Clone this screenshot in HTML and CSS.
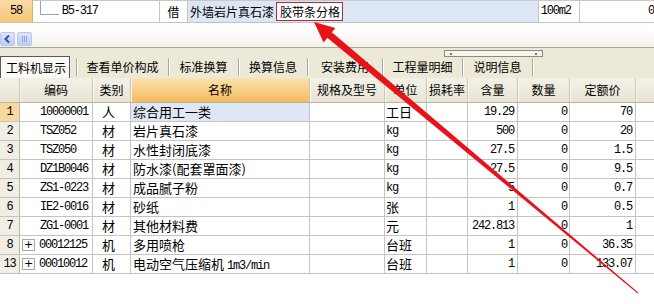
FILE: index.html
```html
<!DOCTYPE html>
<html>
<head>
<meta charset="utf-8">
<link rel="stylesheet" href="styles.css">
</head>
<body>
<div class="page">
  <div class="toprow">
    <div class="n58 mono">58</div>
    <div class="tree"><svg class="tree-line" width="19" height="22" viewBox="0 0 19 22"><path d="M0.5 0 V13.5 H19" fill="none" stroke="#a0a0a0" stroke-width="1"/></svg><span class="mono">B5-317</span></div>
    <div class="jie">借</div>
    <div class="desc">外墙岩片真石漆<span class="redbox">胶带条分格</span></div>
    <div class="unit mono">100m2</div>
    <div class="qty mono">0</div>
  </div>
  <div class="gap"></div>
  <div class="hscroll">
    <div class="sb-btn"><svg width="15" height="14" viewBox="0 0 15 14"><path d="M9 3.5 L5.5 7 L9 10.5" fill="none" stroke="#3d5590" stroke-width="2"/></svg></div>
    <div class="sb-thumb"><svg width="15" height="14" viewBox="0 0 15 14"><path d="M5.5 4 V10 M7.5 4 V10 M9.5 4 V10" stroke="#8ea5d8" stroke-width="1"/></svg></div>
  </div>
  <div class="tabbar">
    <div class="grip"><span class="dot"></span><span class="dot"></span></div>
    <div class="tab sel">工料机显示</div>
    <div class="tabgap"></div>
    <div class="tab w92">查看单价构成</div>
    <div class="tab w70">标准换算</div>
    <div class="tab w69">换算信息</div>
    <div class="tab w75">安装费用</div>
    <div class="tab w80">工程量明细</div>
    <div class="tab w70">说明信息</div>
    <div class="tab tail"></div>
  </div>
  <div class="grid">
    <div class="row head">
      <div class="c hn"></div>
      <div class="c h">编码</div>
      <div class="c h">类别</div>
      <div class="c h hname">名称</div>
      <div class="c h">规格及型号</div>
      <div class="c h">单位</div>
      <div class="c h">损耗率</div>
      <div class="c h">含量</div>
      <div class="c h">数量</div>
      <div class="c h">定额价</div>
      <div class="c h hend"></div>
    </div>
    <div class="row">
      <div class="c num cur mono">1</div>
      <div class="c code mono">10000001</div>
      <div class="c cat">人</div>
      <div class="c name selcell">综合用工一类</div>
      <div class="c"></div>
      <div class="c unitc">工日</div>
      <div class="c"></div>
      <div class="c r mono">19.29</div>
      <div class="c r2 mono">0</div>
      <div class="c r mono">70</div>
      <div class="c end"></div>
    </div>
    <div class="row">
      <div class="c num mono">2</div>
      <div class="c code mono">TSZ052</div>
      <div class="c cat">材</div>
      <div class="c name">岩片真石漆</div>
      <div class="c"></div>
      <div class="c unitc mono">kg</div>
      <div class="c"></div>
      <div class="c r mono">500</div>
      <div class="c r2 mono">0</div>
      <div class="c r mono">20</div>
      <div class="c end"></div>
    </div>
    <div class="row">
      <div class="c num mono">3</div>
      <div class="c code mono">TSZ050</div>
      <div class="c cat">材</div>
      <div class="c name">水性封闭底漆</div>
      <div class="c"></div>
      <div class="c unitc mono">kg</div>
      <div class="c"></div>
      <div class="c r mono">27.5</div>
      <div class="c r2 mono">0</div>
      <div class="c r mono">1.5</div>
      <div class="c end"></div>
    </div>
    <div class="row">
      <div class="c num mono">4</div>
      <div class="c code mono">DZ1B0046</div>
      <div class="c cat">材</div>
      <div class="c name">防水漆(配套罩面漆)</div>
      <div class="c"></div>
      <div class="c unitc mono">kg</div>
      <div class="c"></div>
      <div class="c r mono">27.5</div>
      <div class="c r2 mono">0</div>
      <div class="c r mono">9.5</div>
      <div class="c end"></div>
    </div>
    <div class="row">
      <div class="c num mono">5</div>
      <div class="c code mono">ZS1-0223</div>
      <div class="c cat">材</div>
      <div class="c name">成品腻子粉</div>
      <div class="c"></div>
      <div class="c unitc mono">kg</div>
      <div class="c"></div>
      <div class="c r mono">5</div>
      <div class="c r2 mono">0</div>
      <div class="c r mono">0.7</div>
      <div class="c end"></div>
    </div>
    <div class="row">
      <div class="c num mono">6</div>
      <div class="c code mono">IE2-0016</div>
      <div class="c cat">材</div>
      <div class="c name">砂纸</div>
      <div class="c"></div>
      <div class="c unitc">张</div>
      <div class="c"></div>
      <div class="c r mono">1</div>
      <div class="c r2 mono">0</div>
      <div class="c r mono">0.5</div>
      <div class="c end"></div>
    </div>
    <div class="row">
      <div class="c num mono">7</div>
      <div class="c code mono">ZG1-0001</div>
      <div class="c cat">材</div>
      <div class="c name">其他材料费</div>
      <div class="c"></div>
      <div class="c unitc">元</div>
      <div class="c"></div>
      <div class="c r mono">242.813</div>
      <div class="c r2 mono">0</div>
      <div class="c r mono">1</div>
      <div class="c end"></div>
    </div>
    <div class="row">
      <div class="c num mono">8</div>
      <div class="c code exp mono"><span class="plus">+</span>00012125</div>
      <div class="c cat">机</div>
      <div class="c name">多用喷枪</div>
      <div class="c"></div>
      <div class="c unitc">台班</div>
      <div class="c"></div>
      <div class="c r mono">1</div>
      <div class="c r2 mono">0</div>
      <div class="c r mono">36.35</div>
      <div class="c end"></div>
    </div>
    <div class="row">
      <div class="c num mono">13</div>
      <div class="c code exp mono"><span class="plus">+</span>00010012</div>
      <div class="c cat">机</div>
      <div class="c name">电动空气压缩机 <span class="mono">1m3/min</span></div>
      <div class="c"></div>
      <div class="c unitc">台班</div>
      <div class="c"></div>
      <div class="c r mono">1</div>
      <div class="c r2 mono">0</div>
      <div class="c r mono">133.07</div>
      <div class="c end"></div>
    </div>
  </div>
  <svg class="arrow" width="654" height="304" viewBox="0 0 654 304">
    <polygon points="327,37.5 331.5,32 638.3,292.6 637.7,293.4" fill="#e8121a"/>
    <polygon points="314,22 323.6,42.5 335.4,28.1" fill="#e8121a"/>
  </svg>
</div>
</body>
</html>
```

FILE: styles.css
```css
* { box-sizing: border-box; }
html, body { margin: 0; padding: 0; }
body {
  width: 654px;
  height: 304px;
  overflow: hidden;
  background: #fff;
  font-family: "Noto Sans CJK SC", sans-serif;
  color: #000;
}
.page { position: relative; width: 654px; height: 304px; overflow: hidden; }
.mono {
  font-family: "Liberation Mono", monospace;
  font-size: 12px;
  letter-spacing: -1.2px;
}

/* top row */
.toprow {
  display: flex;
  height: 23px;
  border-top: 1px solid #c8c8c8;
  border-bottom: 1px solid #c0c0c0;
  font-size: 12px;
  line-height: 21px;
  white-space: nowrap;
}
.n58 {
  width: 33px;
  margin-top: -1px;
  height: 22px;
  background: linear-gradient(#fbdca6, #f6c578);
  border-right: 1px solid #d8b070;
  text-align: center;
  line-height: 22px;
}
.tree {
  width: 128px;
  border-right: 1px solid #c4c4c4;
  display: flex;
  align-items: flex-start;
  padding-left: 7px;
}
.tree-line { flex: none; }
.tree .mono { margin-left: 3px; }
.jie {
  width: 28px;
  border-right: 1px solid #c4c4c4;
  text-align: center;
}
.desc {
  width: 353px;
  border-right: 1px solid #c4c4c4;
  background: #dde6f4;
  padding-left: 2px;
  display: flex;
  align-items: center;
}
.redbox {
  display: inline-block;
  margin-left: 2px;
  height: 19px;
  line-height: 17px;
  padding: 0 2px 0 3px;
  border: 1px solid #b8283c;
  background: #fff;
}
.unit {
  width: 42px;
  border-right: 1px solid #c4c4c4;
  padding-left: 2px;
}
.qty {
  width: 74px;
  text-align: right;
}

.gap { height: 7px; }

/* scrollbar */
.hscroll {
  height: 17px;
  display: flex;
  align-items: center;
  gap: 2px;
  padding-left: 0;
  background: linear-gradient(#fefefe, #f3f1e8);
}
.sb-btn, .sb-thumb {
  width: 15px;
  height: 14px;
  border: 1px solid #b7c9ef;
  border-radius: 2px;
  background: linear-gradient(#dbe5fd, #bccdf6);
  display: flex;
}
.sb-btn svg, .sb-thumb svg { margin: -1px; }

/* tab bar */
.tabbar {
  position: relative;
  height: 31px;
  border-top: 1px solid #a9a79c;
  background: #ece9d8;
  display: flex;
  align-items: flex-end;
  font-size: 12px;
  white-space: nowrap;
}
.grip {
  position: absolute;
  left: 444px;
  top: 2px;
  width: 99px;
  height: 7px;
  border: 1px solid #8d8b80;
  background: #f5f4ee;
  display: flex;
  justify-content: space-between;
  align-items: center;
  padding: 0 5px;
}
.grip .dot { width: 2px; height: 2px; background: #777; }
.tab {
  height: 18px;
  margin-bottom: 2px;
  line-height: 18px;
  text-align: center;
  border-left: 1px solid #aca899;
  box-shadow: inset 1px 0 #fff;
}
.tab.sel {
  width: 70px;
  height: 22px;
  margin-bottom: 0;
  line-height: 21px;
  border: 1px solid #5a5a5a;
  border-bottom: none;
  background: #fbfaf6;
  box-shadow: none;
  text-align: left;
  padding-left: 5px;
}
.tabgap { width: 6px; }
.w92 { width: 92px; }
.w70 { width: 70px; }
.w69 { width: 69px; }
.w75 { width: 75px; }
.w80 { width: 80px; }
.tail { width: 10px; }

/* grid */
.row {
  display: grid;
  grid-template-columns: 20px 73px 38px 179px 75px 42px 41px 50px 52px 66px 1fr;
  height: 19px;
  border-bottom: 1px solid #c4c4c4;
  font-size: 13px;
  line-height: 18px;
  white-space: nowrap;
}
.c {
  border-right: 1px solid #c4c4c4;
  overflow: hidden;
}
.c.end { border-right: none; }
.row.head {
  height: 25px;
  border-bottom: 1px solid #b8b4a0;
  font-size: 12px;
  line-height: 24px;
}
.h {
  text-align: center;
  background: linear-gradient(#f3f1e7, #e8e5d5);
  border-right: 1px solid #c9c5b2;
  box-shadow: inset 1px 0 #fbfaf5;
}
.hn {
  background: linear-gradient(#f3f1e7, #e8e5d5);
  border-right: 1px solid #c9c5b2;
}
.hname { background: linear-gradient(#fce2ae, #f4bb5e); }
.hend { border-right: none; }

.num {
  background: #f1efe4;
  text-align: center;
  border-right: 1px solid #b9b6a6;
}
.num.cur { background: #fad99d; }
.code { padding-left: 20px; }
.code.exp { padding-left: 2px; display: flex; align-items: center; }
.plus {
  display: inline-block;
  width: 13px;
  height: 12px;
  border: 1px solid #a8a8a8;
  background: #fbfbfb;
  font-family: "DejaVu Sans", sans-serif;
  font-size: 11px;
  letter-spacing: 0;
  line-height: 10px;
  text-align: center;
  margin-right: 4px;
}
.cat { padding-left: 9px; }
.name { padding-left: 2px; }
.selcell { background: #dfe7f5; }
.unitc { padding-left: 1px; }
.r { text-align: right; padding-right: 3px; }
.r2 { text-align: right; padding-right: 2px; }

/* annotation arrow overlay */
.arrow {
  position: absolute;
  left: 0;
  top: 0;
  pointer-events: none;
}
```
